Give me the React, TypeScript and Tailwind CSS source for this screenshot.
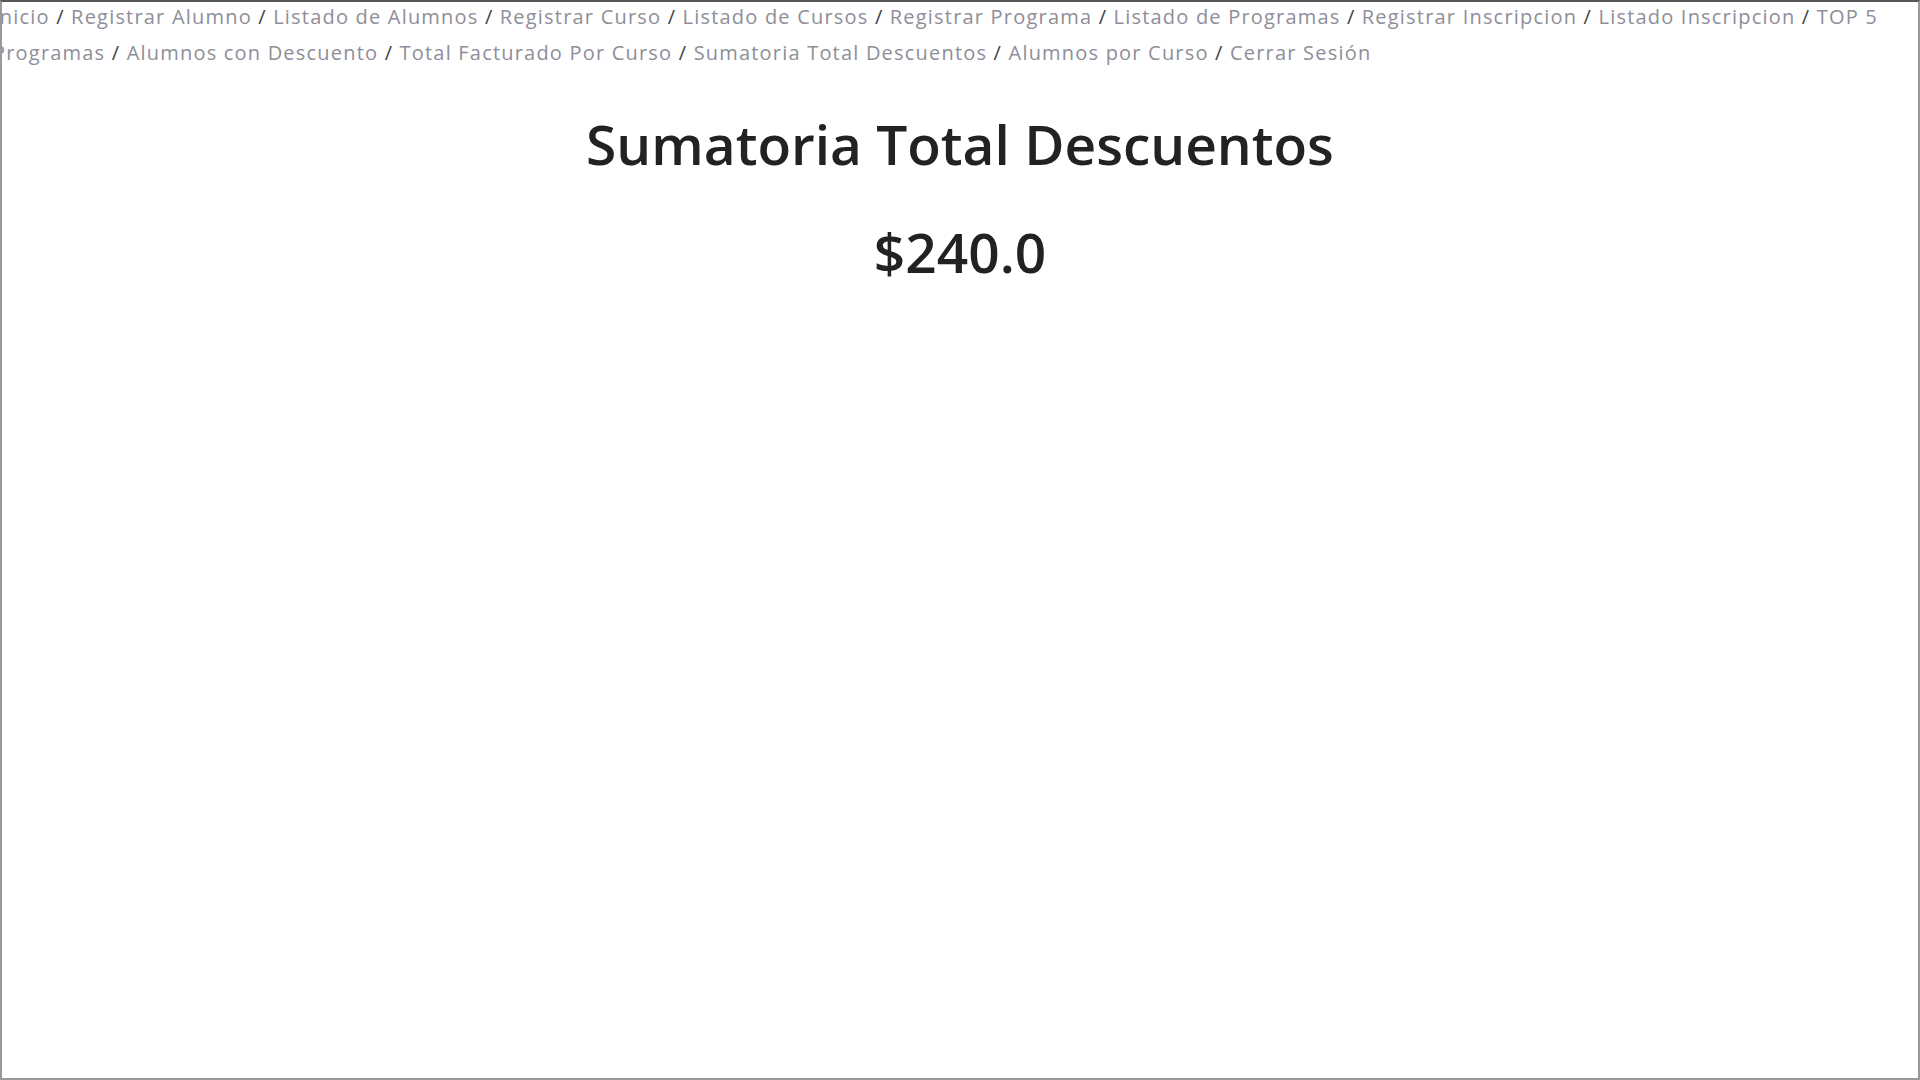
const links = [
  "Inicio",
  "Registrar Alumno",
  "Listado de Alumnos",
  "Registrar Curso",
  "Listado de Cursos",
  "Registrar Programa",
  "Listado de Programas",
  "Registrar Inscripcion",
  "Listado Inscripcion",
  "TOP 5 Programas",
  "Alumnos con Descuento",
  "Total Facturado Por Curso",
  "Sumatoria Total Descuentos",
  "Alumnos por Curso",
  "Cerrar Sesión",
];

export default function App() {
  return (
    <div className="h-[1080px] w-[1920px] overflow-hidden border-2 border-[#9a9a9a] border-t-[#555] bg-white font-['Open_Sans','Noto_Sans',sans-serif] text-[#222]">
      {/* nav */}
      <nav className="-mt-[3px] -ml-[9px] pr-[30px] text-[20px] leading-[36px] tracking-[1.2px]">
        {links.map((l, i) => (
          <span key={l}>
            <a href="#" className="text-[#8e8e99]">
              {l}
            </a>
            {i < links.length - 1 && <span className="text-[#444]"> / </span>}
          </span>
        ))}
      </nav>

      <div className="flex flex-col items-center">
        <h1 className="mt-[37px] text-[55px] font-semibold leading-[72px] text-[#222]">
          Sumatoria Total Descuentos
        </h1>
        <h2 className="mt-[36px] text-[55px] font-semibold leading-[72px] text-[#222]">
          $240.0
        </h2>
      </div>
    </div>
  );
}
